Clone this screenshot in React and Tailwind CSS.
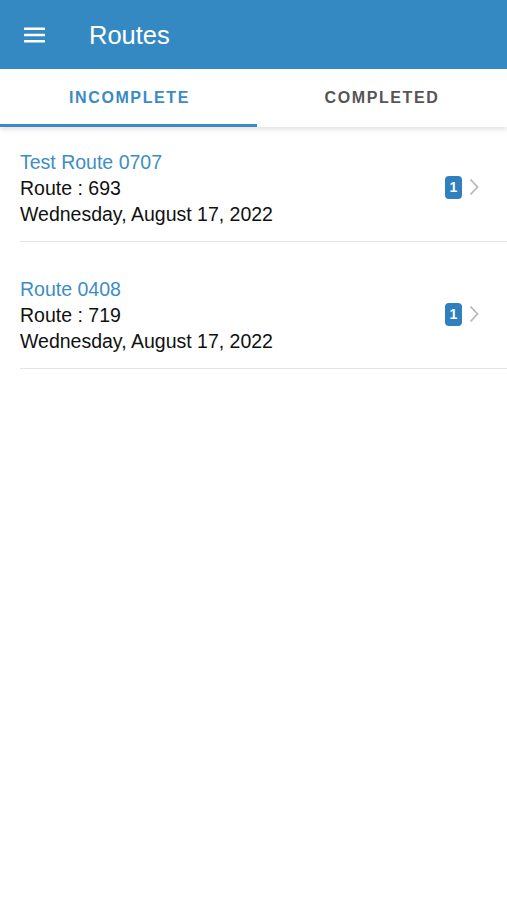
import React from 'react';

const routes = [
    { name: 'Test Route 0707', number: '693', date: 'Wednesday, August 17, 2022', count: 1 },
    { name: 'Route 0408', number: '719', date: 'Wednesday, August 17, 2022', count: 1 },
];

const App = () => {
    return (
        <div className="min-h-screen w-full bg-white font-[family-name:Liberation_Sans,Arial,sans-serif]">
            {/* HEADER */}
            <header className="h-[69px] bg-[#3589c3] flex items-center px-6">
                <svg width="22" height="18" viewBox="0 0 22 18" className="shrink-0">
                    <rect x="0" y="1.5" width="21" height="2.6" rx="0.6" fill="#fff" />
                    <rect x="0" y="7.7" width="21" height="2.6" rx="0.6" fill="#fff" />
                    <rect x="0" y="13.9" width="21" height="2.6" rx="0.6" fill="#fff" />
                </svg>
                <h1 className="ml-[43px] text-[25.5px] text-white leading-none pt-[2px]">Routes</h1>
            </header>

            {/* TABS */}
            <nav className="relative h-[58px] flex bg-white shadow-[0_3px_4px_rgba(0,0,0,0.1)]">
                <div className="w-[257px] flex items-center justify-center border-b-[3px] border-[#3a8bc4]">
                    <span className="text-[16px] font-bold tracking-[1.6px] text-[#3a8bc4] pt-[3px] pl-[2px]">
                        INCOMPLETE
                    </span>
                </div>
                <div className="flex-1 flex items-center justify-center border-b-[3px] border-transparent">
                    <span className="text-[16px] font-bold tracking-[1.6px] text-[#555] pt-[3px]">
                        COMPLETED
                    </span>
                </div>
            </nav>

            {/* LIST */}
            <main className="pl-5 -mt-[12px]">
                {routes.map((r) => (
                    <div key={r.name} className="flex items-center pt-[34px] pb-[14px] border-b border-[#e3e3e3]">
                        <div className="flex-1 text-[19.5px] leading-[26px] text-[#111]">
                            <div className="text-[#3d8dc5]">{r.name}</div>
                            <div>Route : {r.number}</div>
                            <div>{r.date}</div>
                        </div>
                        <div className="flex items-center gap-[7px] pr-[28px] pb-[2px]">
                            <span className="w-[17px] h-[23px] rounded-[4px] bg-[#2f80bd] text-white text-[14px] font-bold flex items-center justify-center">
                                {r.count}
                            </span>
                            <svg width="10" height="18" viewBox="0 0 10 18">
                                <path d="M1.5 1.5 L8.5 9 L1.5 16.5" fill="none" stroke="#b8b8b8" strokeWidth="1.8" />
                            </svg>
                        </div>
                    </div>
                ))}
            </main>
        </div>
    );
};

export default App;
